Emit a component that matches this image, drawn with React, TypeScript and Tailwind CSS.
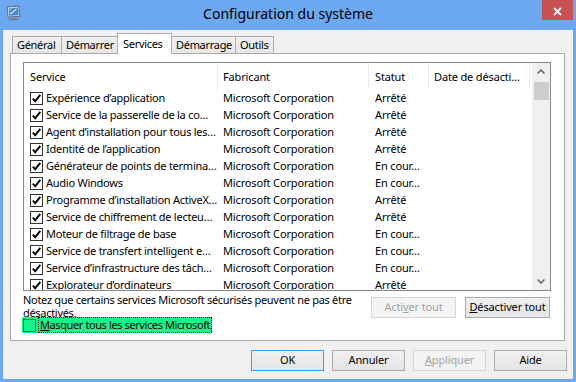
import React from 'react';

// Lignes de la liste des services (texte tronqué comme à l'écran)
const SERVICES = [
  { name: 'Expérience d’application', maker: 'Microsoft Corporation', status: 'Arrêté' },
  { name: 'Service de la passerelle de la co…', maker: 'Microsoft Corporation', status: 'Arrêté' },
  { name: 'Agent d’installation pour tous les…', maker: 'Microsoft Corporation', status: 'Arrêté' },
  { name: 'Identité de l’application', maker: 'Microsoft Corporation', status: 'Arrêté' },
  { name: 'Générateur de points de termina…', maker: 'Microsoft Corporation', status: 'En cour…' },
  { name: 'Audio Windows', maker: 'Microsoft Corporation', status: 'En cour…' },
  { name: 'Programme d’installation ActiveX…', maker: 'Microsoft Corporation', status: 'Arrêté' },
  { name: 'Service de chiffrement de lecteu…', maker: 'Microsoft Corporation', status: 'Arrêté' },
  { name: 'Moteur de filtrage de base', maker: 'Microsoft Corporation', status: 'En cour…' },
  { name: 'Service de transfert intelligent e…', maker: 'Microsoft Corporation', status: 'En cour…' },
  { name: 'Service d’infrastructure des tâch…', maker: 'Microsoft Corporation', status: 'En cour…' },
  { name: 'Explorateur d’ordinateurs', maker: 'Microsoft Corporation', status: 'Arrêté' },
];

const TABS = [
  { label: 'Général', w: 'w-[50px]' },
  { label: 'Démarrer', w: 'w-[57px]' },
  { label: 'Services', w: 'w-[55px]', active: true },
  { label: 'Démarrage', w: 'w-[65px]' },
  { label: 'Outils', w: 'w-[39px]' },
];

function MonitorIcon() {
  return (
    <svg width="16" height="16" viewBox="0 0 16 16">
      <path d="M1.5 2 L13 1 L13.5 11.5 L2 12 Z" fill="#dfe7f2" stroke="#56657c" />
      <path d="M3 3.2 L12 2.5 L12.3 10.2 L3.3 10.7 Z" fill="#3f86dc" />
      <path d="M4.5 9 L10.5 4" stroke="#d6ecff" strokeWidth="1.2" />
      <path d="M4 3.5 L6 3.4 L4.2 6 Z" fill="#9fd0ff" />
      <rect x="5" y="12.2" width="5" height="1.3" fill="#8797ac" />
      <rect x="3" y="13.5" width="9.5" height="1.6" fill="#6c7b90" />
    </svg>
  );
}

function CheckBox({ checked = true }: { checked?: boolean }) {
  return (
    <span className="flex h-[13px] w-[13px] shrink-0 items-center justify-center border border-[#333] bg-white">
      {checked && (
        <svg width="11" height="11" viewBox="0 0 11 11">
          <path d="M1.8 5.6 L4.2 8.2 L9.3 1.9" fill="none" stroke="#000" strokeWidth="1.9" />
        </svg>
      )}
    </span>
  );
}

function WinButton({
  children,
  w,
  variant = 'normal',
}: {
  children: React.ReactNode;
  w: string;
  variant?: 'normal' | 'default' | 'disabled';
}) {
  const look =
    variant === 'disabled'
      ? 'border-[#d5d5d5] bg-[#f4f4f4] text-[#a3a3a3]'
      : variant === 'default'
        ? 'border-[#3c9bf0] bg-linear-to-b from-[#f0f0f0] to-[#e5e5e5] text-black'
        : 'border-[#acacac] bg-linear-to-b from-[#f0f0f0] to-[#e5e5e5] text-black';
  return (
    <div className={`flex h-[21px] items-center justify-center border whitespace-nowrap ${w} ${look}`}>
      {children}
    </div>
  );
}

export default function App() {
  return (
    <div className="flex h-[382px] w-[576px] flex-col bg-[#6ba8ef] px-[3px] pb-[3px] font-['Noto_Sans',sans-serif] text-[11px] tracking-[-0.15px] text-black">
      {/* Barre de titre */}
      <div className="grid h-[30px] shrink-0 grid-cols-[1fr_auto_1fr]">
        <div className="flex items-start pl-[3px] pt-[5px]">
          <MonitorIcon />
        </div>
        <div className="pt-[4px] text-[14px] leading-[20px] tracking-normal">Configuration du système</div>
        <div className="flex items-start justify-end">
          <div className="flex h-[20px] w-[31px] items-center justify-center bg-[#c75050] pt-[3px]">
            <svg width="9" height="9" viewBox="0 0 9 9">
              <path d="M1 1 L8 8 M8 1 L1 8" stroke="#fff" strokeWidth="1.8" />
            </svg>
          </div>
        </div>
      </div>

      {/* Zone cliente */}
      <div className="flex flex-1 flex-col bg-[#f0f0f0]">
        {/* Onglets */}
        <div className="mt-[3px] flex h-[21px] items-end pl-[9px] tracking-[-0.3px] whitespace-nowrap">
          {TABS.map((tab, i) =>
            tab.active ? (
              <div
                key={tab.label}
                className={`relative z-10 -ml-px flex h-[21px] items-start border border-b-0 border-[#acacac] bg-white pl-[5px] pt-[2px] ${tab.w}`}
              >
                {tab.label}
              </div>
            ) : (
              <div
                key={tab.label}
                className={`flex h-[18px] items-center border border-b-0 border-[#acacac] bg-linear-to-b from-[#f0f0f0] to-[#e5e5e5] pl-[4px] ${i > 0 ? '-ml-px' : ''} ${tab.w}`}
              >
                {tab.label}
              </div>
            ),
          )}
        </div>

        {/* Page Services */}
        <div className="-mt-px ml-[7px] mr-[8px] flex h-[288px] flex-col border border-[#acacac] bg-white px-[12px] pt-[8px]">
          {/* Liste */}
          <div className="flex h-[229px] w-[528px] border border-[#828790]">
            <div className="flex w-[508px] flex-col overflow-hidden">
              <div className="flex h-[26px] shrink-0">
                <div className="flex w-[194px] items-center border-r border-[#e3e9f1] pl-[6px] pt-[2px]">Service</div>
                <div className="flex w-[151px] items-center border-r border-[#e3e9f1] pl-[5px] pt-[2px]">Fabricant</div>
                <div className="flex w-[60px] items-center border-r border-[#e3e9f1] pl-[6px] pt-[2px]">Statut</div>
                <div className="flex w-[101px] items-center border-r border-[#e3e9f1] pl-[5px] pt-[2px] whitespace-nowrap">
                  Date de désacti…
                </div>
              </div>
              {SERVICES.map((s) => (
                <div key={s.name} className="flex h-[17px] shrink-0 items-center pt-px whitespace-nowrap">
                  <div className="flex w-[194px] items-center gap-[3px] overflow-hidden pl-[6px] tracking-[-0.25px]">
                    <CheckBox />
                    <span>{s.name}</span>
                  </div>
                  <div className="w-[151px] pl-[5px]">{s.maker}</div>
                  <div className="w-[60px] pl-[6px]">{s.status}</div>
                </div>
              ))}
            </div>
            {/* Barre de défilement */}
            <div className="flex w-[18px] flex-col items-center bg-[#f0f0f0]">
              <div className="flex h-[17px] items-center justify-center">
                <svg width="8" height="5" viewBox="0 0 8 5">
                  <path d="M0.5 4.5 L4 1 L7.5 4.5" fill="none" stroke="#606060" strokeWidth="1.5" />
                </svg>
              </div>
              <div className="mt-[2px] h-[18px] w-[15px] bg-[#cdcdcd]" />
              <div className="flex-1" />
              <div className="flex h-[17px] items-center justify-center">
                <svg width="8" height="5" viewBox="0 0 8 5">
                  <path d="M0.5 0.5 L4 4 L7.5 0.5" fill="none" stroke="#606060" strokeWidth="1.5" />
                </svg>
              </div>
            </div>
          </div>

          {/* Note et boutons */}
          <div className="flex w-[528px] justify-between pr-px">
            <div className="pt-[2px] leading-[13px] tracking-[-0.3px] whitespace-nowrap">
              Notez que certains services Microsoft sécurisés peuvent ne pas être
              <br />
              désactivés.
            </div>
            <div className="mt-[6px] flex gap-[9px]">
              <WinButton w="w-[85px]" variant="disabled">
                <span>
                  Acti<u>v</u>er tout
                </span>
              </WinButton>
              <WinButton w="w-[85px]">
                <span>
                  <u>D</u>ésactiver tout
                </span>
              </WinButton>
            </div>
          </div>
          <div className="-ml-px -mt-[2px] flex h-[16px] items-center gap-[2px] self-start bg-[#14f58a] pl-px whitespace-nowrap">
            <span className="h-[13px] w-[13px] border border-[#16703f]" />
            <span className="flex h-[16px] items-center border border-dotted border-black pl-px pr-px tracking-[-0.4px]">
              <u>M</u>asquer tous les services Microsoft
            </span>
          </div>
        </div>

        {/* Boutons du bas */}
        <div className="mt-[9px] flex justify-end gap-[8px] pr-[6px]">
          <WinButton w="w-[73px]" variant="default">OK</WinButton>
          <WinButton w="w-[73px]">Annuler</WinButton>
          <WinButton w="w-[73px]" variant="disabled">
            <span>
              <u>A</u>ppliquer
            </span>
          </WinButton>
          <WinButton w="w-[73px]">Aide</WinButton>
        </div>
      </div>
    </div>
  );
}
